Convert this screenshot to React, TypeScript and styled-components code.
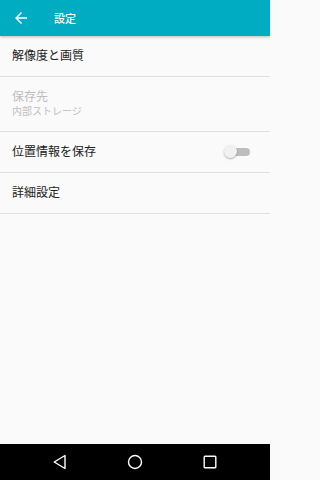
import React, { useState } from 'react';
import styled, { createGlobalStyle } from 'styled-components';

const GlobalStyle = createGlobalStyle`
  html, body {
    margin: 0;
    padding: 0;
    height: 100%;
  }
  body {
    font-family: Roboto, "Noto Sans CJK JP", sans-serif;
    background: #fafafa;
  }
  #root {
    height: 100%;
  }
`;

const Screen = styled.div`
  display: flex;
  flex-direction: column;
  width: 270px;
  height: 480px;
  background: #fafafa;
  overflow: hidden;
`;

const AppBar = styled.header`
  display: flex;
  align-items: center;
  height: 36px;
  flex-shrink: 0;
  padding: 0 0 0 12px;
  background: #00acc1;
  color: #ffffff;
  box-shadow: 0 1px 3px rgba(0, 0, 0, 0.25);
  position: relative;
  z-index: 1;
`;

const BackButton = styled.button`
  display: flex;
  align-items: center;
  justify-content: center;
  width: 18px;
  height: 18px;
  padding: 0;
  border: none;
  background: none;
  color: #ffffff;
`;

const Title = styled.h1`
  margin: 0 0 0 24px;
  font-size: 11px;
  font-weight: 500;
`;

const List = styled.ul`
  flex: 1;
  margin: 0;
  padding: 0;
  list-style: none;
`;

const Row = styled.li<{ $tall?: boolean }>`
  display: flex;
  align-items: center;
  justify-content: space-between;
  height: ${(p) => (p.$tall ? 54 : 40)}px;
  padding: 0 20px 0 12px;
  border-bottom: 1px solid #e0e0e0;
`;

const Labels = styled.div`
  display: flex;
  flex-direction: column;
`;

const Label = styled.span<{ $disabled?: boolean }>`
  font-size: 12px;
  line-height: 16px;
  color: ${(p) => (p.$disabled ? '#bdbdbd' : '#212121')};
`;

const Summary = styled.span`
  font-size: 10px;
  line-height: 14px;
  color: #bdbdbd;
`;

const Switch = styled.button`
  position: relative;
  width: 20px;
  height: 14px;
  padding: 0;
  border: none;
  background: none;
`;

const Track = styled.span<{ $on: boolean }>`
  position: absolute;
  left: 2px;
  right: 0;
  top: 3px;
  height: 8px;
  border-radius: 4px;
  background: ${(p) => (p.$on ? '#80deea' : '#bdbdbd')};
`;

const Thumb = styled.span<{ $on: boolean }>`
  position: absolute;
  top: 0;
  left: ${(p) => (p.$on ? 8 : -6)}px;
  width: 13px;
  height: 13px;
  border-radius: 50%;
  background: ${(p) => (p.$on ? '#00acc1' : '#f1f1f1')};
  box-shadow: 0 1px 2px rgba(0, 0, 0, 0.3);
`;

const NavBar = styled.nav`
  display: flex;
  align-items: center;
  justify-content: center;
  gap: 59px;
  height: 36px;
  flex-shrink: 0;
  background: #000000;
`;

const NavButton = styled.button`
  display: flex;
  align-items: center;
  justify-content: center;
  width: 16px;
  height: 16px;
  padding: 0;
  border: none;
  background: none;
`;

export default function App() {
  const [saveLocation, setSaveLocation] = useState(false);

  return (
    <>
      <GlobalStyle />
      <Screen>
        <AppBar>
          <BackButton aria-label="戻る">
            <svg width="18" height="18" viewBox="0 0 24 24" fill="#ffffff">
              <path d="M20 11H7.83l5.59-5.59L12 4l-8 8 8 8 1.41-1.41L7.83 13H20v-2z" />
            </svg>
          </BackButton>
          <Title>設定</Title>
        </AppBar>

        <List>
          <Row>
            <Label>解像度と画質</Label>
          </Row>
          <Row $tall>
            <Labels>
              <Label $disabled>保存先</Label>
              <Summary>内部ストレージ</Summary>
            </Labels>
          </Row>
          <Row>
            <Label>位置情報を保存</Label>
            <Switch onClick={() => setSaveLocation(!saveLocation)}>
              <Track $on={saveLocation} />
              <Thumb $on={saveLocation} />
            </Switch>
          </Row>
          <Row>
            <Label>詳細設定</Label>
          </Row>
        </List>

        <NavBar>
          <NavButton aria-label="戻る">
            <svg width="16" height="16" viewBox="0 0 16 16" fill="none" stroke="#ffffff" strokeWidth="1.4">
              <path d="M13 1.5v13L2.2 8z" strokeLinejoin="round" />
            </svg>
          </NavButton>
          <NavButton aria-label="ホーム">
            <svg width="16" height="16" viewBox="0 0 16 16" fill="none" stroke="#ffffff" strokeWidth="1.4">
              <circle cx="8" cy="8" r="6.5" />
            </svg>
          </NavButton>
          <NavButton aria-label="履歴">
            <svg width="16" height="16" viewBox="0 0 16 16" fill="none" stroke="#ffffff" strokeWidth="1.4">
              <rect x="2.2" y="2.2" width="11.6" height="11.6" rx="0.8" />
            </svg>
          </NavButton>
        </NavBar>
      </Screen>
    </>
  );
}
